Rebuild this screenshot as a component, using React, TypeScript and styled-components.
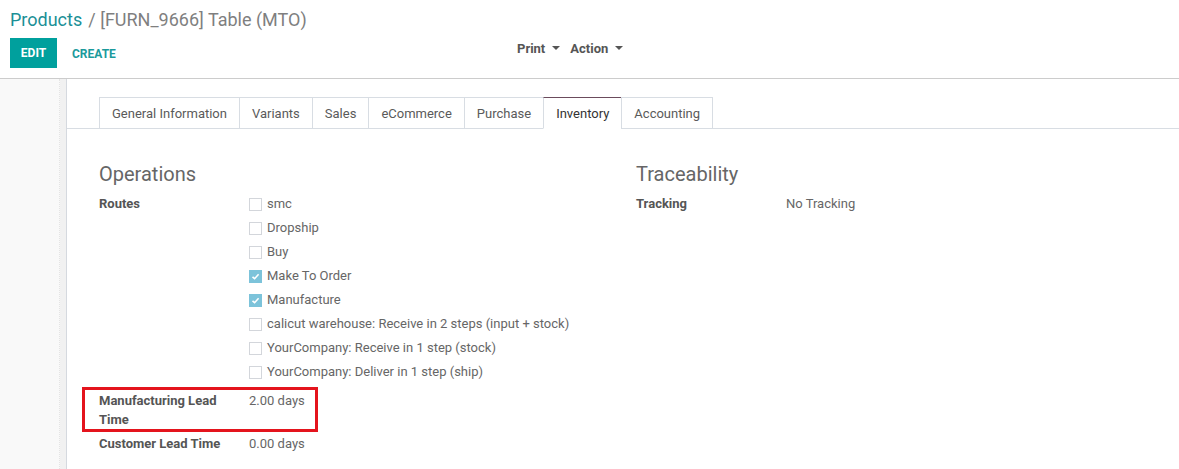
import React from 'react';
import styled, {createGlobalStyle} from 'styled-components';

const GlobalStyle = createGlobalStyle`
  html, body {
    margin: 0;
    padding: 0;
    background: #ffffff;
    font-family: Roboto, "Noto Sans", "Liberation Sans", sans-serif;
    font-size: 13px;
    color: #666666;
  }
`;

const tabs = [
  'General Information',
  'Variants',
  'Sales',
  'eCommerce',
  'Purchase',
  'Inventory',
  'Accounting',
];

const routes = [
  {label: 'smc', checked: false},
  {label: 'Dropship', checked: false},
  {label: 'Buy', checked: false},
  {label: 'Make To Order', checked: true},
  {label: 'Manufacture', checked: true},
  {label: 'calicut warehouse: Receive in 2 steps (input + stock)', checked: false},
  {label: 'YourCompany: Receive in 1 step (stock)', checked: false},
  {label: 'YourCompany: Deliver in 1 step (ship)', checked: false},
];

const Check = () => (
  <svg width="9" height="9" viewBox="0 0 9 9">
    <path d="M1.5 4.8 L3.6 6.7 L7.6 2.3" fill="none" stroke="#fff" strokeWidth="1.6" />
  </svg>
);

const App = () => {
  return (
    <Page>
      <GlobalStyle />
      <ControlPanel>
        <Breadcrumb>
          <Crumb>Products</Crumb>
          <Current>/ [FURN_9666] Table (MTO)</Current>
        </Breadcrumb>
        <ButtonRow>
          <MainButtons>
            <EditButton>EDIT</EditButton>
            <LinkButton>CREATE</LinkButton>
          </MainButtons>
          <Sidebar>
            <DropToggle>
              Print <Caret />
            </DropToggle>
            <DropToggle>
              Action <Caret />
            </DropToggle>
          </Sidebar>
        </ButtonRow>
      </ControlPanel>

      <Main>
        <Gutter />
        <Sheet>
          <TabBar>
            {tabs.map((t) => (
              <Tab key={t} active={t === 'Inventory'}>
                {t}
              </Tab>
            ))}
          </TabBar>

          <Groups>
            <Group>
              <Heading>Operations</Heading>
              <Field>
                <Label>Routes</Label>
                <RouteList>
                  {routes.map((r) => (
                    <RouteRow key={r.label}>
                      <Box checked={r.checked}>{r.checked && <Check />}</Box>
                      {r.label}
                    </RouteRow>
                  ))}
                </RouteList>
              </Field>
              <Highlight>
                <WrapField>
                  <WrapLabel>Manufacturing Lead Time</WrapLabel>
                  <WrapValue>2.00 days</WrapValue>
                </WrapField>
              </Highlight>
              <Field>
                <Label>Customer Lead Time</Label>
                <Value>0.00 days</Value>
              </Field>
            </Group>
            <Group>
              <Heading>Traceability</Heading>
              <Field>
                <Label>Tracking</Label>
                <Value>No Tracking</Value>
              </Field>
            </Group>
          </Groups>
        </Sheet>
      </Main>
    </Page>
  );
};

const Page = styled.div`
  width: 1179px;
  height: 469px;
  overflow: hidden;
  display: flex;
  flex-direction: column;
`;

const ControlPanel = styled.div`
  height: 78px;
  padding: 0 10px;
  border-bottom: 1px solid #cccccc;
  background: #fff;
  flex-shrink: 0;
`;

const Breadcrumb = styled.div`
  height: 38px;
  display: flex;
  align-items: center;
  gap: 6px;
  font-size: 18px;
  padding-top: 1px;
  box-sizing: border-box;
`;

const Crumb = styled.span`
  color: #1b8f96;
`;

const Current = styled.span`
  color: #7f7f7f;
`;

const ButtonRow = styled.div`
  display: flex;
  align-items: center;
  height: 30px;
`;

const MainButtons = styled.div`
  display: flex;
  align-items: center;
  width: 507px;
  gap: 2px;
`;

const EditButton = styled.div`
  background: #00a09d;
  color: #fff;
  font-weight: 700;
  font-size: 12px;
  height: 30px;
  width: 47px;
  display: flex;
  align-items: center;
  justify-content: center;
`;

const LinkButton = styled.div`
  color: #1b9a9c;
  font-weight: 700;
  font-size: 12px;
  padding: 2px 13px 0;
`;

const Sidebar = styled.div`
  display: flex;
  gap: 10px;
  margin-top: -10px;
`;

const DropToggle = styled.div`
  display: flex;
  align-items: center;
  gap: 7px;
  color: #555;
  font-weight: 700;
  font-size: 13px;
`;

const Caret = styled.span`
  width: 0;
  height: 0;
  border-left: 4px solid transparent;
  border-right: 4px solid transparent;
  border-top: 4px solid #555;
`;

const Main = styled.div`
  flex: 1;
  display: flex;
  background: #f9f9f9;
`;

const Gutter = styled.div`
  width: 59px;
  border-right: 1px dotted #e4e4e4;
  background: #f9f9f9;
`;

const Sheet = styled.div`
  flex: 1;
  margin-left: 6px;
  background: #fff;
  border-left: 1px solid #d5d9df;
  box-shadow: -6px 0 0 #f1f1f1;
`;

const TabBar = styled.div`
  display: flex;
  margin-top: 18px;
  padding-left: 32px;
  border-bottom: 1px solid #d8dde3;
  height: 31px;
`;

const Tab = styled.div<{active?: boolean}>`
  padding: 0 12px;
  display: flex;
  align-items: center;
  margin-bottom: -1px;
  background: #fff;
  color: ${({active}) => (active ? '#333' : '#5a5a5a')};
  border: 1px solid #d8dde3;
  border-top: 1px solid ${({active}) => (active ? '#6b4b5c' : '#d8dde3')};
  border-bottom-color: ${({active}) => (active ? '#fff' : '#d8dde3')};
  & + & {
    margin-left: -1px;
  }
`;

const Groups = styled.div`
  display: grid;
  grid-template-columns: 537px 1fr;
  padding-left: 32px;
  margin-top: 31px;
`;

const Group = styled.div`
  display: flex;
  flex-direction: column;
`;

const Heading = styled.div`
  font-size: 20px;
  line-height: 28px;
  color: #666;
  margin-bottom: 4px;
`;

const Field = styled.div`
  display: flex;
  line-height: 24px;
`;

const Label = styled.div`
  width: 150px;
  flex-shrink: 0;
  font-weight: 700;
  color: #555;
`;

const Value = styled.div`
  color: #666;
`;

const RouteList = styled.div`
  display: flex;
  flex-direction: column;
`;

const RouteRow = styled.div`
  display: flex;
  align-items: center;
  height: 24px;
  color: #666;
`;

const Box = styled.span<{checked?: boolean}>`
  width: 13px;
  height: 13px;
  box-sizing: border-box;
  margin-right: 5px;
  display: flex;
  align-items: center;
  justify-content: center;
  border: 1px solid ${({checked}) => (checked ? '#7cc3da' : '#d3d6db')};
  background: ${({checked}) => (checked ? '#7cc3da' : '#fff')};
`;

const Highlight = styled.div`
  margin-top: 3px;
  margin-left: -17px;
  width: 236px;
  border: 3px solid #e4141d;
  padding: 1px 0 0 14px;
  box-sizing: border-box;
`;

const WrapField = styled.div`
  display: flex;
  line-height: 19px;
`;

const WrapLabel = styled.div`
  width: 136px;
  padding-right: 14px;
  font-weight: 700;
  color: #555;
`;

const WrapValue = styled.div`
  color: #666;
`;

export default App;
